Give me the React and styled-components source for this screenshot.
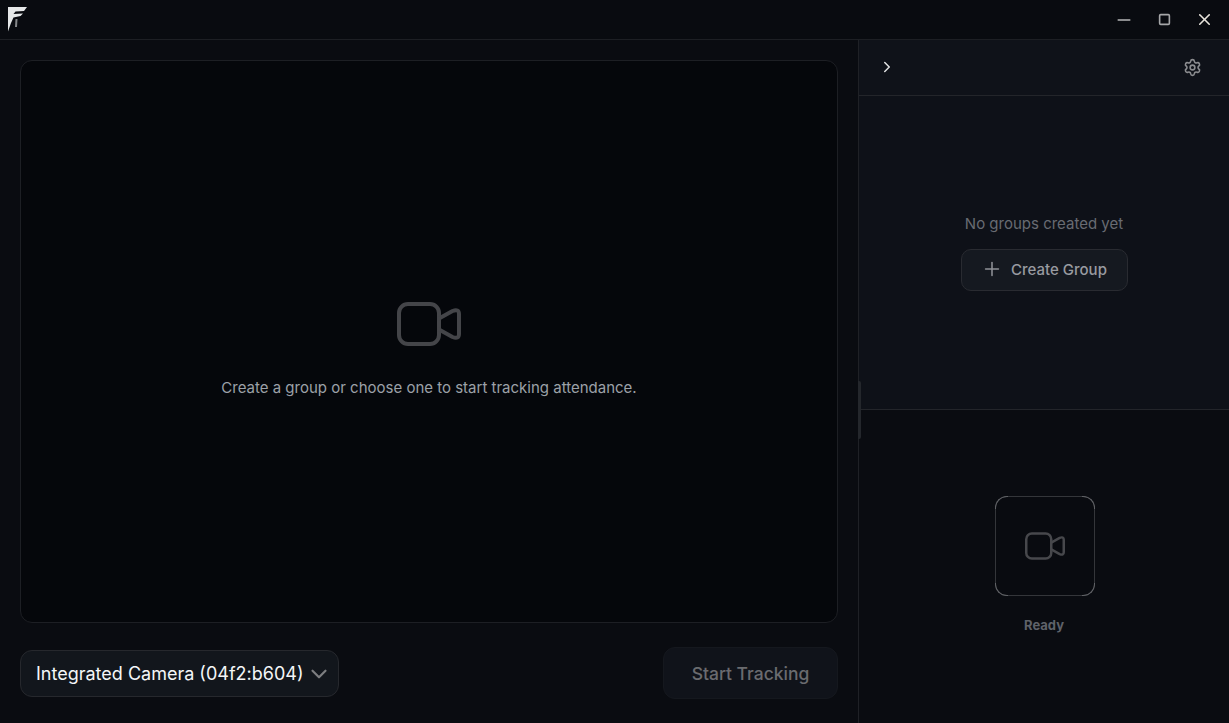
import React from "react";
import styled, { createGlobalStyle } from "styled-components";
import { ChevronRight, ChevronDown, Settings, Plus, Minus, Square, X } from "lucide-react";

const Global = createGlobalStyle`
  html, body { margin: 0; padding: 0; height: 100%; background: #090b10; overflow: hidden; }
  #root { height: 100%; }
  * { box-sizing: border-box; }
`;

const Shell = styled.div`
  width: 1229px;
  height: 723px;
  display: flex;
  flex-direction: column;
  background: #0a0c11;
  font-family: Inter, "Liberation Sans", sans-serif;
  color: #fff;
`;
const TitleBar = styled.header`
  height: 40px;
  flex: none;
  display: flex;
  align-items: flex-start;
  justify-content: space-between;
  padding: 0 0 0 8px;
  background: #090b10;
  border-bottom: 1px solid #1d1f24;
`;
const Logo = styled.svg`
  width: 20px;
  height: 25px;
  margin-top: 7px;
`;
const WindowControls = styled.div`
  display: flex;
  margin-right: 5px;
`;
const WindowButton = styled.button`
  width: 40px;
  height: 39px;
  padding: 0;
  border: 0;
  background: none;
  display: flex;
  align-items: center;
  justify-content: center;
  color: ${(p) => p.$color};
`;
const Body = styled.div`
  flex: 1;
  min-height: 0;
  display: flex;
`;
const Main = styled.main`
  width: 859px;
  flex: none;
  display: flex;
  flex-direction: column;
  padding: 20px 20px 24px;
  border-right: 1px solid #1f2126;
  background: #0a0c11;
`;
const Stage = styled.section`
  height: 563px;
  flex: none;
  display: flex;
  flex-direction: column;
  align-items: center;
  background: #05070b;
  border: 1px solid #1d1f24;
  border-radius: 12px;
  padding-top: 241px;
`;
const CameraGlyph = styled.svg`
  display: block;
  width: ${(p) => p.$width}px;
  height: ${(p) => Math.round((p.$width * 44) / 64)}px;
  color: ${(p) => p.$color};
`;
const StageText = styled.p`
  margin: 32px 0 0;
  font-size: 15px;
  line-height: 20px;
  color: #9ca1a8;
`;
const Controls = styled.div`
  display: flex;
  align-items: center;
  justify-content: space-between;
  margin-top: 24px;
`;
const CameraSelect = styled.button`
  width: 319px;
  height: 47px;
  display: flex;
  align-items: center;
  justify-content: space-between;
  padding: 0 6px 0 15px;
  background: #12161c;
  border: 1px solid #26282d;
  border-radius: 12px;
  color: #f4f6f8;
  font: 400 18px Inter, "Liberation Sans", sans-serif;
  white-space: nowrap;
`;
const SelectChevron = styled(ChevronDown)`
  width: 26px;
  height: 26px;
  color: #7d7e80;
  flex: none;
  margin-top: 2px;
`;
const StartButton = styled.button`
  width: 175px;
  height: 52px;
  background: #10131a;
  border: 1px solid #15181e;
  border-radius: 12px;
  color: #6a6b6f;
  font: 500 17.5px Inter, "Liberation Sans", sans-serif;
`;
const Sidebar = styled.aside`
  position: relative;
  flex: 1;
  min-width: 0;
  display: flex;
  flex-direction: column;
`;
const Handle = styled.div`
  position: absolute;
  left: -1px;
  top: 341px;
  width: 3px;
  height: 58px;
  background: #24272c;
  border-radius: 0 2px 2px 0;
`;
const SideHeader = styled.div`
  height: 56px;
  flex: none;
  display: flex;
  align-items: center;
  justify-content: space-between;
  padding: 0 27px 1px 19px;
  background: #0f1219;
  border-bottom: 1px solid #23252a;
`;
const Collapse = styled(ChevronRight)`
  width: 18px;
  height: 18px;
  color: #e2e3e4;
`;
const Gear = styled(Settings)`
  width: 19px;
  height: 19px;
  color: #8b8c8f;
  margin-top: 1px;
`;
const Groups = styled.section`
  height: 314px;
  flex: none;
  display: flex;
  flex-direction: column;
  align-items: center;
  padding-top: 118px;
  background: #0e1118;
  border-bottom: 1px solid #23252a;
`;
const EmptyText = styled.p`
  margin: 0;
  font-size: 15px;
  line-height: 20px;
  color: #686b72;
`;
const CreateButton = styled.button`
  width: 167px;
  height: 42px;
  margin-top: 15px;
  padding: 0 0 2px;
  display: flex;
  align-items: center;
  justify-content: center;
  gap: 8px;
  background: #151920;
  border: 1px solid #292b31;
  border-radius: 10px;
  color: #999ba0;
  font: 500 15px Inter, "Liberation Sans", sans-serif;
`;
const PlusIcon = styled(Plus)`
  width: 22px;
  height: 22px;
  color: #8f9196;
`;
const Preview = styled.section`
  flex: 1;
  display: flex;
  flex-direction: column;
  align-items: center;
  padding-top: 86px;
  background: #0a0c11;
`;
const PreviewFrame = styled.div`
  position: relative;
  width: 100px;
  height: 100px;
  margin-left: 2px;
  display: flex;
  align-items: center;
  justify-content: center;
  border: 1px solid #34363a;
  border-radius: 12px;
  background: #090b10;
`;
const Corner = styled.span`
  position: absolute;
  width: 13px;
  height: 13px;
  border: 1px solid #606266;
  border-radius: ${(p) => p.$radius};
  ${(p) => p.$css}
`;
const ReadyLabel = styled.p`
  margin: 21px 0 0;
  font-size: 13px;
  line-height: 16px;
  font-weight: 700;
  color: #5f6269;
`;

const corners = [
  { r: "12px 0 0 0", c: "top:-1px;left:-1px;border-right:0;border-bottom:0;" },
  { r: "0 12px 0 0", c: "top:-1px;right:-1px;border-left:0;border-bottom:0;" },
  { r: "0 0 0 12px", c: "bottom:-1px;left:-1px;border-right:0;border-top:0;" },
  { r: "0 0 12px 0", c: "bottom:-1px;right:-1px;border-left:0;border-top:0;" },
];

function CameraIcon({ width, color }) {
  return (
    <CameraGlyph $width={width} $color={color} viewBox="0 0 64 44" fill="none" stroke="currentColor" strokeWidth="4" strokeLinejoin="round" strokeLinecap="round">
      <rect x="2" y="2" width="40" height="40" rx="9" />
      <path d="M42 16.5 L55.5 9 Q62 6.5 62 12 V32 Q62 37.5 55.5 35 L42 27.5" />
    </CameraGlyph>
  );
}

export default function App() {
  return (
    <Shell>
      <Global />
      <TitleBar>
        <Logo viewBox="8 7 20 25" aria-label="logo">
          <path d="M8 7 L27 7 L24 11 L15.5 11.5 L13.5 14 L23 13.5 L20.5 16 L13.5 17.5 L11 23 L8 31.5 Z" fill="#e6e8e9" />
          <path d="M15.5 19 L17.5 19 L17 27 L15 27 Z" fill="#85878a" />
        </Logo>
        <WindowControls>
          <WindowButton $color="#b5b6b7"><Minus size={20} strokeWidth={1.8} /></WindowButton>
          <WindowButton $color="#a5a6a8"><Square size={13} strokeWidth={3} /></WindowButton>
          <WindowButton $color="#e8e4dc"><X size={19} strokeWidth={2} /></WindowButton>
        </WindowControls>
      </TitleBar>
      <Body>
        <Main>
          <Stage>
            <CameraIcon width={64} color="#444549" />
            <StageText>Create a group or choose one to start tracking attendance.</StageText>
          </Stage>
          <Controls>
            <CameraSelect>
              Integrated Camera (04f2:b604)
              <SelectChevron />
            </CameraSelect>
            <StartButton disabled>Start Tracking</StartButton>
          </Controls>
        </Main>
        <Sidebar>
          <Handle />
          <SideHeader>
            <Collapse />
            <Gear />
          </SideHeader>
          <Groups>
            <EmptyText>No groups created yet</EmptyText>
            <CreateButton>
              <PlusIcon strokeWidth={1.7} />
              Create Group
            </CreateButton>
          </Groups>
          <Preview>
            <PreviewFrame>
              {corners.map((k) => (
                <Corner key={k.c} $radius={k.r} $css={k.c} />
              ))}
              <CameraIcon width={40} color="#47484c" />
            </PreviewFrame>
            <ReadyLabel>Ready</ReadyLabel>
          </Preview>
        </Sidebar>
      </Body>
    </Shell>
  );
}
